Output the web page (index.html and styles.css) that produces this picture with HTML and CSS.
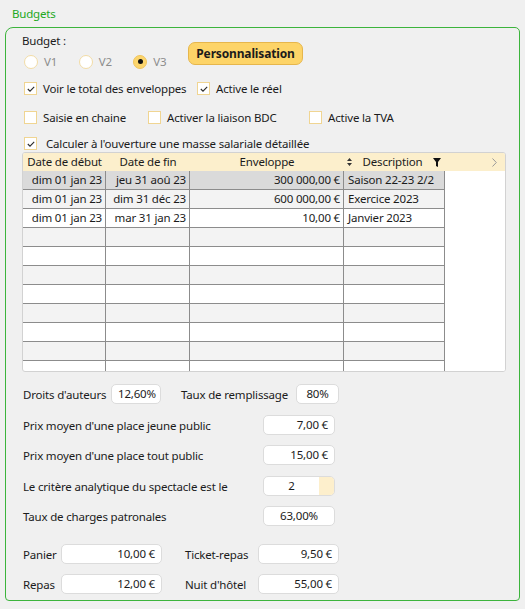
FILE: index.html
```html
<!DOCTYPE html>
<html lang="fr">
<head>
  <meta charset="UTF-8">
  <title>Budgets</title>
  <link rel="stylesheet" href="styles.css">
</head>
<body>
  <div class="title">Budgets</div>

  <div class="panel">
    <div class="top">
      <div class="budget">
        <div class="budget-label">Budget :</div>
        <div class="radios">
          <span class="radio"><i></i>V1</span>
          <span class="radio"><i></i>V2</span>
          <span class="radio on"><i><b></b></i>V3</span>
        </div>
      </div>
      <button class="perso">Personnalisation</button>
    </div>

    <div class="checks row1">
      <span class="check w173"><span class="box"><svg width="8" height="6" viewBox="0 0 8 6"><path d="M0.8 3 L3 5.2 L7.2 0.8" fill="none" stroke="#2b2b2b" stroke-width="1.1"/></svg></span>Voir le total des enveloppes</span>
      <span class="check"><span class="box"><svg width="8" height="6" viewBox="0 0 8 6"><path d="M0.8 3 L3 5.2 L7.2 0.8" fill="none" stroke="#2b2b2b" stroke-width="1.1"/></svg></span>Active le réel</span>
    </div>

    <div class="checks row2">
      <span class="check w124"><span class="box"></span>Saisie en chaine</span>
      <span class="check w161"><span class="box"></span>Activer la liaison BDC</span>
      <span class="check"><span class="box"></span>Active la TVA</span>
    </div>

    <div class="checks row3">
      <span class="check wide"><span class="box"><svg width="8" height="6" viewBox="0 0 8 6"><path d="M0.8 3 L3 5.2 L7.2 0.8" fill="none" stroke="#2b2b2b" stroke-width="1.1"/></svg></span>Calculer à l'ouverture une masse salariale détaillée</span>
    </div>

    <div class="grid">
      <div class="head">
        <div class="hc">Date de début</div>
        <div class="hc">Date de fin</div>
        <div class="hc">Enveloppe</div>
        <div class="hc desc">
          <svg width="5" height="8" viewBox="0 0 5 8"><path d="M2.5 0 L5 3 L0 3 Z M0 5 L5 5 L2.5 8 Z" fill="#333"/></svg>
          <span>Description</span>
          <svg width="8" height="9" viewBox="0 0 8 9"><path d="M0 0 H8 L5 4 V9 L3 8 V4 Z" fill="#111"/></svg>
        </div>
        <div class="hc more"><svg width="5" height="9" viewBox="0 0 5 9"><path d="M0.5 0.5 L4.3 4.5 L0.5 8.5" fill="none" stroke="#999" stroke-width="1"/></svg></div>
      </div>
      <div class="row sel"><div class="c num">dim 01 jan 23</div><div class="c num">jeu 31 aoû 23</div><div class="c num">300 000,00 €</div><div class="c">Saison 22-23 2/2</div><div class="c blank"></div></div>
      <div class="row alt"><div class="c num">dim 01 jan 23</div><div class="c num">dim 31 déc 23</div><div class="c num">600 000,00 €</div><div class="c">Exercice 2023</div><div class="c blank"></div></div>
      <div class="row"><div class="c num">dim 01 jan 23</div><div class="c num">mar 31 jan 23</div><div class="c num">10,00 €</div><div class="c">Janvier 2023</div><div class="c blank"></div></div>
      <div class="row alt"><div class="c"></div><div class="c"></div><div class="c"></div><div class="c"></div><div class="c blank"></div></div>
      <div class="row"><div class="c"></div><div class="c"></div><div class="c"></div><div class="c"></div><div class="c blank"></div></div>
      <div class="row alt"><div class="c"></div><div class="c"></div><div class="c"></div><div class="c"></div><div class="c blank"></div></div>
      <div class="row"><div class="c"></div><div class="c"></div><div class="c"></div><div class="c"></div><div class="c blank"></div></div>
      <div class="row alt"><div class="c"></div><div class="c"></div><div class="c"></div><div class="c"></div><div class="c blank"></div></div>
      <div class="row"><div class="c"></div><div class="c"></div><div class="c"></div><div class="c"></div><div class="c blank"></div></div>
      <div class="row alt"><div class="c"></div><div class="c"></div><div class="c"></div><div class="c"></div><div class="c blank"></div></div>
      <div class="row"><div class="c"></div><div class="c"></div><div class="c"></div><div class="c"></div><div class="c blank"></div></div>
    </div>

    <div class="field f1">
      <span class="lbl w89">Droits d'auteurs</span>
      <span class="inp center w50">12,60%</span>
      <span class="lbl w116 gap19">Taux de remplissage</span>
      <span class="inp center w43">80%</span>
    </div>
    <div class="field f2">
      <span class="lbl w241">Prix moyen d'une place jeune public</span>
      <span class="inp w72">7,00 €</span>
    </div>
    <div class="field f3">
      <span class="lbl w241">Prix moyen d'une place tout public</span>
      <span class="inp w72">15,00 €</span>
    </div>
    <div class="field f4">
      <span class="lbl w241">Le critère analytique du spectacle est le</span>
      <span class="inp spin w72"><span class="val">2</span><span class="btn"></span></span>
    </div>
    <div class="field f5">
      <span class="lbl w241">Taux de charges patronales</span>
      <span class="inp center w72">63,00%</span>
    </div>
    <div class="field f6">
      <span class="lbl w39">Panier</span>
      <span class="inp w101">10,00 €</span>
      <span class="lbl w74 gap22">Ticket-repas</span>
      <span class="inp w81">9,50 €</span>
    </div>
    <div class="field f7">
      <span class="lbl w39">Repas</span>
      <span class="inp w101">12,00 €</span>
      <span class="lbl w74 gap22">Nuit d'hôtel</span>
      <span class="inp w81">55,00 €</span>
    </div>
  </div>
</body>
</html>
```

FILE: styles.css
```css
body {
  margin: 0;
  background: #f0f0f0;
  font-family: "Noto Sans", "Liberation Sans", sans-serif;
  font-size: 11.5px;
  letter-spacing: -0.18px;
  color: #1b1b1b;
}

.title {
  height: 27px;
  line-height: 27px;
  padding-left: 12px;
  color: #22a822;
}

.panel {
  margin-left: 5px;
  width: 515px;
  box-sizing: border-box;
  border: 1px solid #3cb43c;
  border-radius: 8px 5px 4px 4px;
  padding: 5px 0 6px 16px;
}

/* haut : budget + bouton */
.top {
  display: flex;
}

.budget {
  width: 166px;
}

.budget-label {
  line-height: 16px;
}

.radios {
  display: flex;
  margin-top: 5px;
  height: 15px;
  padding-left: 2px;
}

.radio {
  width: 55px;
  display: flex;
  align-items: center;
  gap: 6px;
  color: #8c8c8c;
}

.radio i {
  width: 14px;
  height: 14px;
  box-sizing: border-box;
  border: 1px solid #f2dca6;
  border-radius: 50%;
  background: #fff;
  display: flex;
  align-items: center;
  justify-content: center;
}

.radio.on i {
  background: #fcd56c;
  border-color: #efc45e;
}

.radio.on b {
  width: 5px;
  height: 5px;
  border-radius: 50%;
  background: #111;
}

.perso {
  margin-top: 9px;
  width: 115px;
  height: 23px;
  padding: 0;
  background: #fdd468;
  border: 1px solid #e6b64c;
  border-radius: 7px;
  font-family: inherit;
  font-size: 12px;
  letter-spacing: -0.15px;
  font-weight: bold;
  color: #1b1b1b;
}

/* cases a cocher */
.checks {
  display: flex;
  align-items: center;
  height: 16px;
  padding-left: 2px;
}

.row1 { margin-top: 11px; }
.row2 { margin-top: 13px; }
.row3 { margin-top: 10px; }

.check {
  display: flex;
  align-items: center;
  gap: 6px;
}

.check.wide { gap: 9px; }
.w173 { width: 173px; }
.w124 { width: 124px; }
.w161 { width: 161px; }

.box {
  width: 13px;
  height: 13px;
  box-sizing: border-box;
  border: 1px solid #f0d592;
  background: #fff;
  display: flex;
  align-items: center;
  justify-content: center;
  padding-top: 1px;
}

/* tableau */
.grid {
  margin-top: 1px;
  width: 484px;
  height: 220px;
  box-sizing: border-box;
  border: 1px solid #d2d2d2;
  border-radius: 3px;
  background: #fff;
  overflow: hidden;
}

.head,
.row {
  display: grid;
  grid-template-columns: 83px 84px 154px 101px 1fr;
}

.head {
  height: 18px;
  background: #fcefcc;
}

.hc {
  display: flex;
  align-items: center;
  justify-content: center;
  line-height: 18px;
  white-space: nowrap;
}

.hc.desc {
  justify-content: space-between;
  padding: 0 4px 0 3px;
}

.hc.more {
  justify-content: flex-end;
  padding-right: 8px;
}

.row {
  height: 19px;
}

.row.alt .c { background: #f3f3f3; }
.row.sel .c { background: #dadada; }

.c {
  box-sizing: border-box;
  border-right: 1px solid #8c8c8c;
  border-bottom: 1px solid #8c8c8c;
  line-height: 18px;
  padding: 0 4px;
  white-space: nowrap;
  overflow: hidden;
}

.c.num {
  text-align: right;
  padding-right: 3px;
}

.row .c.blank {
  border: none;
  background: #fff;
}

/* champs du bas */
.field {
  display: flex;
  align-items: center;
  height: 20px;
}

.f1 { margin-top: 12px; }
.f2 { margin-top: 11px; }
.f3 { margin-top: 10px; }
.f4 { margin-top: 11px; }
.f5 { margin-top: 10px; }
.f6 { margin-top: 18px; }
.f7 { margin-top: 10px; }

.lbl {
  padding-left: 1px;
  box-sizing: border-box;
  white-space: nowrap;
}

.w89 { width: 89px; }
.w116 { width: 116px; }
.w241 { width: 241px; }
.w39 { width: 39px; }
.w74 { width: 74px; }
.gap19 { margin-left: 19px; }
.gap22 { margin-left: 22px; }

.inp {
  height: 20px;
  box-sizing: border-box;
  background: #fff;
  border: 1px solid #dcdcdc;
  border-radius: 5px;
  line-height: 18px;
  text-align: right;
  padding: 0 6px;
  white-space: nowrap;
}

.inp.center { text-align: center; }

.w50 { width: 50px; }
.w43 { width: 43px; }
.w72 { width: 72px; }
.w101 { width: 101px; }
.w81 { width: 81px; }

.inp.spin {
  display: flex;
  padding: 0;
  overflow: hidden;
}

.spin .val {
  flex: 1;
  text-align: center;
}

.spin .btn {
  width: 15px;
  background: #fdefcc;
}
```
